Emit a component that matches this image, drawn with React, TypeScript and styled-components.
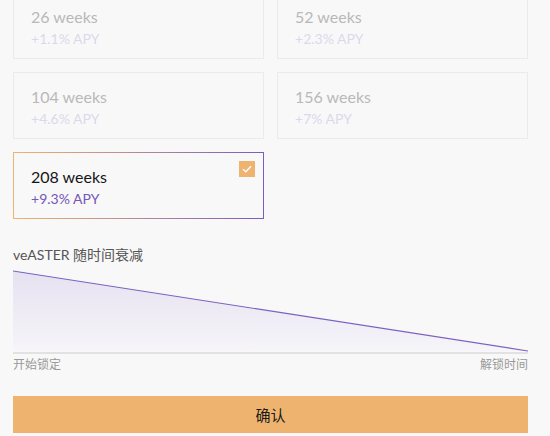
import styled, { createGlobalStyle } from 'styled-components';

const GlobalStyle = createGlobalStyle`
  html, body {
    margin: 0;
    padding: 0;
    background: #f8f8f8;
    overflow: hidden;
  }
  body {
    font-family: Lato, "Noto Sans", "Noto Sans CJK SC", sans-serif;
  }
`;

const Panel = styled.div`
  width: 515px;
  margin: -8px 0 0 13px;
  display: flex;
  flex-direction: column;
`;

const OptionGrid = styled.div`
  display: grid;
  grid-template-columns: 1fr 1fr;
  gap: 13px;
`;

const OptionCard = styled.div<{ $active?: boolean }>`
  position: relative;
  box-sizing: border-box;
  height: 67px;
  padding: 14px 17px 0;
  display: flex;
  flex-direction: column;
  gap: 3px;
  border: 1px solid ${({ $active }) => ($active ? 'transparent' : '#ebebeb')};
  background: ${({ $active }) =>
    $active
      ? 'linear-gradient(#f8f8f8, #f8f8f8) padding-box, linear-gradient(90deg, #eeb46f, #7b5cc0) border-box'
      : '#f8f8f8'};
`;

const Weeks = styled.div<{ $active?: boolean }>`
  font-size: 16px;
  line-height: 20px;
  color: ${({ $active }) => ($active ? '#161616' : '#b9b9b9')};
`;

const Apy = styled.div<{ $active?: boolean }>`
  font-size: 14px;
  line-height: 18px;
  color: ${({ $active }) => ($active ? '#7457b8' : '#dcd8ec')};
`;

const Check = styled.div`
  position: absolute;
  top: 8px;
  right: 8px;
  width: 16px;
  height: 16px;
  background: #eeb46f;
  display: flex;
  align-items: center;
  justify-content: center;
`;

const ChartTitle = styled.div`
  margin-top: 27px;
  font-size: 14px;
  line-height: 18px;
  color: #555;
`;

const ChartBox = styled.div`
  margin-top: 6px;
  height: 82px;
  border-bottom: 2px solid #e2e2e2;
  svg {
    display: block;
  }
`;

const AxisRow = styled.div`
  display: flex;
  justify-content: space-between;
  margin-top: 3px;
  font-size: 12px;
  line-height: 16px;
  color: #999;
`;

const ConfirmButton = styled.button`
  margin-top: 23px;
  height: 37px;
  border: none;
  background: #eeb46f;
  font-family: inherit;
  font-size: 15px;
  color: #1a1a1a;
  cursor: pointer;
`;

const options = [
  { weeks: 26, apy: '1.1' },
  { weeks: 52, apy: '2.3' },
  { weeks: 104, apy: '4.6' },
  { weeks: 156, apy: '7' },
  { weeks: 208, apy: '9.3' },
];

const selected = 208;

export default function App() {
  return (
    <>
      <GlobalStyle />
      <Panel>
        <OptionGrid>
          {options.map((o) => {
            const active = o.weeks === selected;
            return (
              <OptionCard key={o.weeks} $active={active}>
                <Weeks $active={active}>{o.weeks} weeks</Weeks>
                <Apy $active={active}>+{o.apy}% APY</Apy>
                {active && (
                  <Check>
                    <svg width="10" height="8" viewBox="0 0 10 8">
                      <path d="M1 4.2 L3.8 6.8 L9 1.2" fill="none" stroke="#fff" strokeWidth="1.4" />
                    </svg>
                  </Check>
                )}
              </OptionCard>
            );
          })}
        </OptionGrid>

        <ChartTitle>veASTER 随时间衰减</ChartTitle>
        <ChartBox>
          <svg width="515" height="82" viewBox="0 0 515 82" preserveAspectRatio="none">
            <defs>
              <linearGradient id="decayFill" x1="0" y1="0" x2="0" y2="1">
                <stop offset="0" stopColor="#e6e1f1" />
                <stop offset="1" stopColor="#f6f5f9" />
              </linearGradient>
            </defs>
            <path d="M0 1 L515 81 L0 81 Z" fill="url(#decayFill)" />
            <path d="M0 1 L515 81" fill="none" stroke="#7b62c2" strokeWidth="1.2" />
          </svg>
        </ChartBox>
        <AxisRow>
          <span>开始锁定</span>
          <span>解锁时间</span>
        </AxisRow>

        <ConfirmButton>确认</ConfirmButton>
      </Panel>
    </>
  );
}
